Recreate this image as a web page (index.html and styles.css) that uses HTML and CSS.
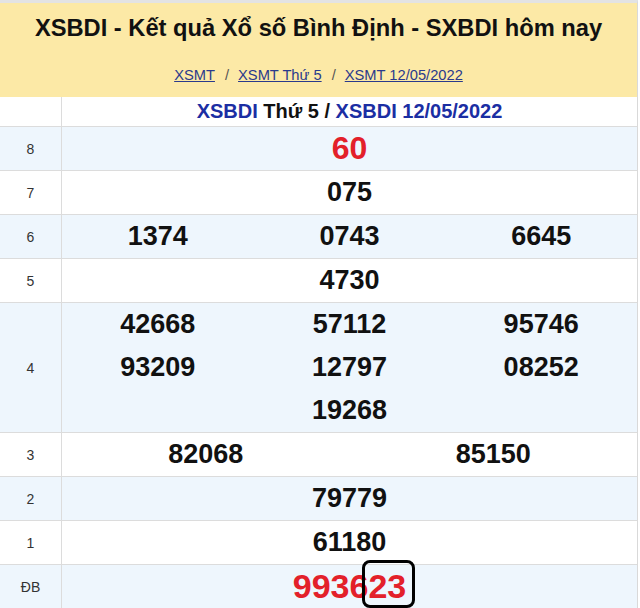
FILE: index.html
```html
<!DOCTYPE html>
<html lang="vi">
<head>
<meta charset="utf-8">
<title>XSBDI</title>
<link rel="stylesheet" href="styles.css">
</head>
<body>
<div class="wrap">
  <div class="header">
    <h1 class="title">XSBDI - Kết quả Xổ số Bình Định - SXBDI hôm nay</h1>
    <div class="crumbs">
      <a href="#">XSMT</a><span class="sep">/</span><a href="#">XSMT Thứ 5</a><span class="sep">/</span><a href="#">XSMT 12/05/2022</a>
    </div>
  </div>
  <table class="kq">
    <tr class="sub">
      <td class="lbl"></td>
      <td class="subtitle"><span class="blue">XSBDI</span> Thứ 5 / <span class="blue">XSBDI 12/05/2022</span></td>
    </tr>
    <tr class="alt">
      <td class="lbl">8</td>
      <td><div class="nums c1"><span class="n big red">60</span></div></td>
    </tr>
    <tr>
      <td class="lbl">7</td>
      <td><div class="nums c1"><span class="n">075</span></div></td>
    </tr>
    <tr class="alt">
      <td class="lbl">6</td>
      <td><div class="nums c3"><span class="n">1374</span><span class="n">0743</span><span class="n">6645</span></div></td>
    </tr>
    <tr>
      <td class="lbl">5</td>
      <td><div class="nums c1"><span class="n">4730</span></div></td>
    </tr>
    <tr class="alt">
      <td class="lbl">4</td>
      <td><div class="nums c3"><span class="n">42668</span><span class="n">57112</span><span class="n">95746</span><span class="n">93209</span><span class="n">12797</span><span class="n">08252</span><span class="n mid">19268</span></div></td>
    </tr>
    <tr>
      <td class="lbl">3</td>
      <td><div class="nums c2"><span class="n">82068</span><span class="n">85150</span></div></td>
    </tr>
    <tr class="alt">
      <td class="lbl">2</td>
      <td><div class="nums c1"><span class="n">79779</span></div></td>
    </tr>
    <tr>
      <td class="lbl">1</td>
      <td><div class="nums c1"><span class="n">61180</span></div></td>
    </tr>
    <tr class="alt">
      <td class="lbl">ĐB</td>
      <td><div class="nums c1"><span class="n db red">9936<span class="tail">23</span></span></div></td>
    </tr>
  </table>
</div>
</body>
</html>
```
FILE: styles.css
```css
html, body {
  margin: 0;
  padding: 0;
  background: #fff;
}
body {
  font-family: "Liberation Sans", Arial, sans-serif;
  color: #111;
}
.wrap {
  width: 637px;
  border-top: 3px solid #e3e3e3;
  border-right: 1px solid #d9d9d9;
  overflow: hidden;
  height: 605px;
}
.header {
  background: #fce9a6;
  height: 94px;
  text-align: center;
  box-sizing: border-box;
  padding-top: 11px;
}
.title {
  margin: 0;
  font-size: 23.7px;
  line-height: 28px;
  font-weight: bold;
  color: #111;
}
.crumbs {
  margin-top: 24px;
  font-size: 14.7px;
  line-height: 18px;
  color: #555;
}
.crumbs a {
  color: #2a3a8c;
  text-decoration: underline;
}
.sep {
  display: inline-block;
  margin: 0 9px 0 10px;
  color: #555;
}
.kq {
  width: 637px;
  border-collapse: collapse;
  table-layout: fixed;
}
.kq td {
  padding: 0;
  border-bottom: 1px solid #dcdcdc;
  height: 43px;
  vertical-align: middle;
}
.kq td.lbl {
  width: 61px;
  border-right: 1px solid #dcdcdc;
  text-align: center;
  font-size: 14px;
  color: #333;
}
.kq tr.sub td {
  height: 29px;
}
.subtitle {
  text-align: center;
  font-size: 20px;
  font-weight: bold;
  color: #111;
}
.blue {
  color: #1b2ea3;
}
.alt td {
  background: #eef6fd;
}
.nums {
  display: grid;
  text-align: center;
}
.c1 { grid-template-columns: 1fr; }
.c2 { grid-template-columns: 1fr 1fr; }
.c3 { grid-template-columns: 1fr 1fr 1fr; }
.n {
  font-size: 27px;
  font-weight: bold;
  line-height: 43px;
  color: #111;
}
.n.mid {
  grid-column: 2;
}
.n.big {
  font-size: 32px;
}
.n.db {
  font-size: 34px;
}
.red {
  color: #e3202a;
}
.tail {
  position: relative;
}
.tail::after {
  content: "";
  position: absolute;
  left: -6px;
  right: -9px;
  top: -7px;
  bottom: -3px;
  border: 3px solid #000;
  border-radius: 8px;
}
```
